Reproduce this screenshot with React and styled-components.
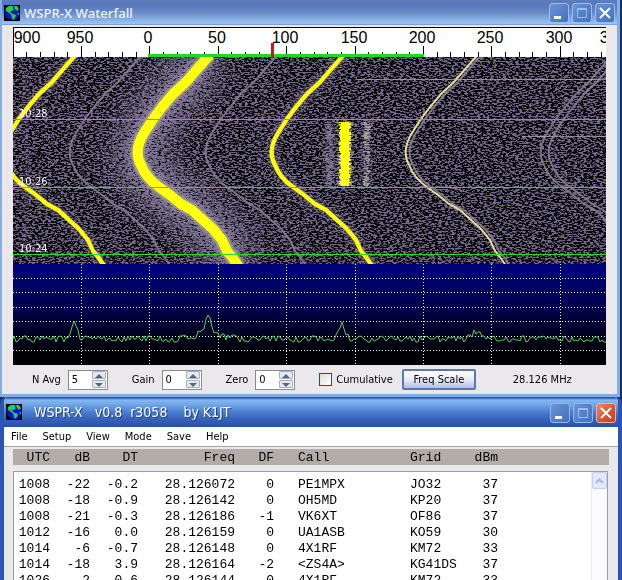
import React from 'react'
import styled, { createGlobalStyle } from 'styled-components'

const GlobalStyle = createGlobalStyle`
  * {
    box-sizing: border-box;
  }
  body {
    margin: 0;
    background: #16305f;
    font-family: "DejaVu Sans Condensed", "Open Sans", sans-serif;
    font-size: 11px;
    color: #000;
  }
`

const rows = [
  ['1008', '-22', '-0.2', '28.126072', '0', 'PE1MPX', 'JO32', '37'],
  ['1008', '-18', '-0.9', '28.126142', '0', 'OH5MD', 'KP20', '37'],
  ['1008', '-21', '-0.3', '28.126186', '-1', 'VK6XT', 'OF86', '37'],
  ['1012', '-16', '0.0', '28.126159', '0', 'UA1ASB', 'KO59', '30'],
  ['1014', '-6', '-0.7', '28.126148', '0', '4X1RF', 'KM72', '33'],
  ['1014', '-18', '3.9', '28.126164', '-2', '<ZS4A>', 'KG41DS', '37'],
  ['1026', '2', '0.6', '28.126144', '0', '4X1RF', 'KM72', '33'],
]
const headings = ['UTC', 'dB', 'DT', 'Freq', 'DF', 'Call', 'Grid', 'dBm']
const columns = [37, 40, 48, 97, 39, 136, 64, 24]
const menus = ['File', 'Setup', 'View', 'Mode', 'Save', 'Help']

// px per 50 Hz, and where 0 Hz sits in the plot
const STEP = 68.4
const ZERO = 136.4
const marks = [
  { label: '900', x: 14 },
  { label: '950', x: 67 },
  { label: '0', x: 135 },
  { label: '50', x: 204 },
  { label: '100', x: 272 },
  { label: '150', x: 341 },
  { label: '200', x: 409 },
  { label: '250', x: 477 },
  { label: '300', x: 546 },
  { label: '350', x: 600 },
]
const verticals = [-1, 0, 1, 2, 3, 4, 5, 6].map(i => Math.round(ZERO + i * STEP))

// drift of one carrier through the three time slots
const DRIFT =
  'M197 -2 L193 2 L179 18 L173 25 L160 37 L149 50 L140 62 L131 76 Q120 94 128 108 Q133 121 146 130 L157 138 L168 147 L179 153 L190 163 L200 172 L209 183 L214 194 L219 200 L226 210'

const noise = (seed, amount) => {
  let s = seed
  return () => {
    s = (s * 16807) % 2147483647
    return (s / 2147483647 - 0.5) * amount
  }
}

const tracePoints = () => {
  const rand = noise(4211, 7)
  const peaks = [[61, 17, 3], [195, 17, 2], [195, 8, 11], [329, 17, 3], [463, 8, 4]]
  const pts = []
  for (let x = 1; x < 2000; x += 2) {
    let y = 75 + rand()
    peaks.forEach(([px, h, w]) => {
      y -= h * Math.exp(-((x - px) ** 2) / (2 * w * w))
    })
    pts.push(`${x},${Math.round(y)}`)
  }
  return `0,75 ${pts.join(' ')}`
}
const trace = tracePoints()

const burst = (cx, half, wobble, seed) => {
  const rand = noise(seed, wobble)
  const bars = []
  for (let y = 65; y < 129; y += 1) {
    const l = Math.round(cx - half + rand())
    const r = Math.round(cx + half + rand())
    if (r > l) bars.push(`M${l} ${y}h${r - l}v1h${l - r}z`)
  }
  return bars.join('')
}

const Page = styled.div`
  display: flex;
  flex-direction: column;
  height: 100vh;
  overflow: hidden;
`

const Window = styled.section`
  display: flex;
  flex-direction: column;
  flex: ${p => (p.$active ? '1 0 auto' : 'none')};
  margin-right: ${p => (p.$active ? 0 : '2px')};
  border: solid ${p => (p.$active ? '#2a55b4' : '#82aee8')};
  border-width: ${p => (p.$active ? '0 4px' : '0 3px 3px 2px')};
  border-radius: ${p => (p.$active ? '7px 7px 0 0' : 0)};
  background: #ebe8ec;
  overflow: hidden;
`

const TitleBar = styled.header`
  display: flex;
  align-items: center;
  gap: ${p => (p.$active ? '12px' : '4px')};
  height: ${p => (p.$active ? '30px' : '25px')};
  margin: 0 ${p => (p.$active ? '-4px' : '-3px')} 0 ${p => (p.$active ? '-4px' : '-2px')};
  padding: 0 ${p => (p.$active ? '6px' : '5px')} 0 ${p => (p.$active ? '6px' : '4px')};
  background: ${p =>
    p.$active
      ? 'linear-gradient(#1d4c9c 0, #2c62b8 1px, #86b8f0 3px, #6ea4e6 8px, #4779cc 16px, #3560b8 23px, #2a4fa6 30px)'
      : 'linear-gradient(#5f7dbc 0, #5878b8 5px, #6488c8 12px, #8fb6e8 21px, #9cc4f0 24px, #5a80b8 25px)'};
`

const Title = styled.h1`
  flex: 1;
  margin: 0;
  white-space: pre;
  color: ${p => (p.$active ? '#fff' : '#e8f0fc')};
  font-family: ${p => (p.$active ? '"DejaVu Sans Condensed"' : '"Open Sans"')}, sans-serif;
  font-size: ${p => (p.$active ? '14px' : '13px')};
  font-weight: ${p => (p.$active ? 400 : 600)};
  text-shadow: ${p => (p.$active ? '1px 1px #1c3c84' : 'none')};
`

const Caption = styled.div`
  display: flex;
  gap: 3px;
  padding-top: ${p => (p.$active ? '2px' : 0)};
`

const CaptionButton = styled.button`
  width: 20px;
  height: 20px;
  padding: 0;
  border: 1px solid ${p => (p.$close ? '#e8b0a8' : p.$active ? '#90b8ee' : '#9cbcec')};
  border-radius: 3px;
  background: ${p =>
    p.$close
      ? 'linear-gradient(135deg, #e89070, #d8502c 60%, #c04428)'
      : 'linear-gradient(135deg, #6a94d8, #4470bc)'};

  svg {
    display: block;
  }
`

const Body = styled.div`
  display: flex;
  flex-direction: column;
  padding: 2px 11px 0;
`

const Ruler = styled.svg`
  display: block;
  width: 100%;
  height: 30px;
  border-top: 1px solid #000;
  border-left: 1px solid #000;
  background: #fff;
  font-family: "Liberation Sans", Arial, sans-serif;
  font-size: 16px;
`

const Waterfall = styled.svg`
  display: block;
  width: 100%;
  height: 207px;
  background: #050408;
  font-size: 11px;
`

const Spectrum = styled.svg`
  display: block;
  width: 100%;
  height: 101px;
  background: linear-gradient(#000080, #00004a 45%, #000008 85%, #000);
`

const Controls = styled.form`
  display: flex;
  align-items: center;
  height: 29px;
  padding-left: 19px;
`

const Field = styled.label`
  display: flex;
  align-items: center;
  gap: 7px;
  margin-right: 24px;
`

const Spin = styled.span`
  display: flex;
  align-items: center;
  width: 40px;
  height: 20px;
  border: 1px solid #8c8a90;
  background: #fff;
`

const SpinInput = styled.input`
  flex: 1;
  min-width: 0;
  padding: 0 0 0 3px;
  border: 0;
  outline: 0;
  background: transparent;
  font: inherit;
`

const SpinArrows = styled.span`
  display: flex;
  flex-direction: column;
  gap: 1px;
  padding-right: 1px;
`

const SpinButton = styled.button`
  width: 14px;
  height: 8px;
  padding: 0;
  border: 1px solid #a4b0c0;
  border-radius: 1px;
  background: #e4e8f0;

  svg {
    display: block;
    margin: 0 auto;
  }
`

const Check = styled.label`
  display: flex;
  align-items: center;
  gap: 4px;
  margin-right: 9px;

  input {
    appearance: none;
    width: 13px;
    height: 13px;
    margin: 0;
    border: 1px solid #1c5180;
    background: linear-gradient(135deg, #dcdcd7, #fff);
  }
`

const ScaleButton = styled.button`
  width: 74px;
  height: 21px;
  padding: 0;
  border: 2px solid #5878b4;
  border-radius: 2px;
  background: linear-gradient(#fff, #e8ecf8 50%, #b4c0dc);
  font: inherit;
`

const Frequency = styled.output`
  margin-left: 37px;
`

const MenuBar = styled.nav`
  display: flex;
  gap: 15px;
  height: 20px;
  padding-left: 7px;
  border-bottom: 1px solid #a8a4a4;
  background: #fff;
`

const MenuItem = styled.button`
  padding: 0;
  border: 0;
  background: none;
  font: inherit;
`

const Log = styled.div`
  display: flex;
  flex-direction: column;
  gap: 6px;
  padding: 2px 9px 0;
`

const LogTable = styled.table`
  table-layout: fixed;
  width: 485px;
  border-collapse: collapse;
  font-family: "Liberation Mono", "Courier New", monospace;
  font-size: 13px;
  line-height: 16px;
`

const Cell = styled.td`
  padding: 0 0 0 ${p => (p.$left ? '24px' : 0)};
  text-align: ${p => (p.$left ? 'left' : 'right')};
  font-weight: 400;
  white-space: nowrap;
`

const GridCell = styled(Cell)`
  padding: 0;
  text-align: left;
`

const HeadBar = styled.div`
  height: 16px;
  background: #b4aca6;

  table {
    line-height: 18px;
  }
`

const ListBox = styled.div`
  display: flex;
  justify-content: space-between;
  align-items: stretch;
  margin-right: 1px;
  border: 1px solid #a09c9c;
  border-bottom: 0;
  background: #fff;

  table {
    margin: 5px 0 0 -1px;
  }
`

const ScrollTrack = styled.div`
  width: 16px;
  border-left: 1px solid #e8e8f4;
  background: #fafaff;
`

const ScrollButton = styled.button`
  display: flex;
  align-items: center;
  justify-content: center;
  width: 15px;
  height: 17px;
  padding: 0;
  border: 1px solid #c4d0ec;
  border-radius: 2px;
  background: #e0e8fa;
`

const Globe = () => (
  <svg width="16" height="16" viewBox="0 0 16 16" aria-hidden="true">
    <rect width="16" height="16" fill="#000" />
    <path d="M4 1h8l3 4v6l-3 4H6l-4-3-1-3V4z" fill="#0814c8" />
    <path d="M2 3l3-2h4v2l1 1-2 2H6v1l2 1v1H6L4 7 2 6z" fill="#20d050" />
    <path d="M10 1h3l2 3-2 2-2-2z" fill="#20d050" />
    <path d="M7 9h3l2 1-1 3-2 2-1-2z" fill="#20d050" />
    <path d="M13 8h2v2h-1z" fill="#20b060" />
  </svg>
)

const WindowButtons = ({ active }) => (
  <Caption $active={active}>
    <CaptionButton $active={active} type="button" aria-label="Minimize">
      <svg width="18" height="18">
        <rect x="4" y="12" width="7" height="3" fill="#fff" />
      </svg>
    </CaptionButton>
    <CaptionButton $active={active} type="button" aria-label="Maximize">
      <svg width="18" height="18" fill="none" stroke="#9cc0f0">
        <path d="M4.5 4.5h9v9h-9zM4 5.5h10" />
      </svg>
    </CaptionButton>
    <CaptionButton $active={active} $close={active} type="button" aria-label="Close">
      <svg width="18" height="18" stroke="#fff" strokeWidth="2">
        <path d="M4 4l10 10M14 4L4 14" />
      </svg>
    </CaptionButton>
  </Caption>
)

const SpinField = ({ label, value }) => (
  <Field>
    {label}
    <Spin>
      <SpinInput type="text" defaultValue={value} />
      <SpinArrows>
        <SpinButton type="button" aria-label={`${label} up`}>
          <svg width="8" height="5"><path d="M0 5l4-4 4 4z" fill="#58687c" /></svg>
        </SpinButton>
        <SpinButton type="button" aria-label={`${label} down`}>
          <svg width="8" height="5"><path d="M0 1l4 4 4-4z" fill="#58687c" /></svg>
        </SpinButton>
      </SpinArrows>
    </Spin>
  </Field>
)

const FrequencyRuler = () => {
  const ticks = []
  for (let i = -9; i < 200; i += 1) {
    const x = Math.round(ZERO + (i * STEP) / 5) - 1
    ticks.push(`M${x}.5 ${i % 5 === 0 ? 18 : 24}V29`)
  }
  return (
    <Ruler>
      <path d={ticks.join('')} stroke="#000" />
      <rect x="134" y="26" width="276" height="3" fill="#20d828" />
      <rect x="257" y="15" width="3" height="14" fill="#c81820" />
      {marks.map(m => (
        <text key={m.label} x={m.x - 1} y="15" textAnchor="middle">{m.label}</text>
      ))}
    </Ruler>
  )
}

const WaterfallPlot = () => (
  <Waterfall>
    <defs>
      <path id="drift" d={DRIFT} fill="none" />
      <filter id="speckle" x="0" y="0" width="100%" height="100%" colorInterpolationFilters="sRGB">
        <feTurbulence type="fractalNoise" baseFrequency=".31 .71" numOctaves="3" seed="7" />
        <feColorMatrix values="0 0 0 0 .46  0 0 0 0 .41  0 0 0 0 .54  9 0 0 0 -4.2" />
      </filter>
      <filter id="dense" x="0" y="0" width="100%" height="100%" colorInterpolationFilters="sRGB">
        <feTurbulence type="fractalNoise" baseFrequency=".33 .73" numOctaves="3" seed="23" />
        <feColorMatrix values="0 0 0 0 .52  0 0 0 0 .48  0 0 0 0 .61  7 0 0 0 -2.6" />
      </filter>
      <filter id="soft" filterUnits="userSpaceOnUse" x="-200" y="-50" width="1000" height="300">
        <feGaussianBlur stdDeviation="14" />
      </filter>
      <filter id="edge" filterUnits="userSpaceOnUse" x="-200" y="-50" width="1000" height="300">
        <feGaussianBlur stdDeviation="2" />
      </filter>
      <mask id="near" maskUnits="userSpaceOnUse" x="0" y="0" width="2000" height="207">
        <use href="#drift" stroke="#fff" strokeWidth="50" filter="url(#soft)" />
        <use href="#drift" x="134" stroke="#777" strokeWidth="14" filter="url(#edge)" />
        <use href="#drift" x="-134" stroke="#777" strokeWidth="12" filter="url(#edge)" />
        <path d="M317 64V130M332 64V130M353 64V130" stroke="#bbb" strokeWidth="9" filter="url(#edge)" />
        <path d="M13 10V200M103 145V200M247 60V200M275 130V207M293 150V207M251 10V60" stroke="#666" strokeWidth="4" filter="url(#edge)" />
      </mask>
    </defs>
    <rect width="100%" height="207" filter="url(#speckle)" />
    <g mask="url(#near)">
      <rect width="100%" height="207" filter="url(#dense)" />
    </g>
    <use href="#drift" stroke="#9086ac" strokeWidth="20" opacity=".5" filter="url(#edge)" />
    <use href="#drift" stroke="#b0a884" strokeWidth="14" opacity=".6" />
    <g stroke="#8c8298" strokeWidth="2" opacity=".85">
      <use href="#drift" x="-68" />
      <use href="#drift" x="68" />
      <use href="#drift" x="272" />
      <use href="#drift" x="403" />
      <use href="#drift" x="411" />
    </g>
    <use href="#drift" x="268" stroke="#e4dc98" strokeWidth="2" />
    <g stroke="#b8b040" strokeWidth="5" opacity=".6">
      <use href="#drift" x="-134" />
      <use href="#drift" x="134" />
    </g>
    <g stroke="#ffff10">
      <use href="#drift" strokeWidth="10" />
      <use href="#drift" x="-134" strokeWidth="4" />
      <use href="#drift" x="134" strokeWidth="4" />
    </g>
    <path d={burst(332, 6, 7, 91)} fill="#8c8298" />
    <path d={burst(332, 5, 3, 17)} fill="#ffff10" />
    <path d={burst(316, 1, 7, 55)} fill="#8c84a0" opacity=".8" />
    <path d={burst(354, 1, 6, 77)} fill="#b4b09c" opacity=".8" />
    <g fill="#b8b4b0" opacity=".7">
      <rect x="345" y="22" width="100%" height="1" />
      <rect x="509" y="79" width="100%" height="1" />
    </g>
    <g fill="#20e020">
      <rect y="62" width="100%" height="1" />
      <rect y="130" width="100%" height="1" />
      <rect y="197" width="100%" height="1" />
    </g>
    <g fill="#f4f4f4">
      <text x="6" y="60">10:28</text>
      <text x="6" y="128">10:26</text>
      <text x="6" y="195">10:24</text>
    </g>
  </Waterfall>
)

const SpectrumPlot = () => (
  <Spectrum>
    <g stroke="#f4f4fa" strokeDasharray="1 2">
      {[14, 28, 43, 57, 72, 86].map(y => (
        <path key={y} d={`M0 ${y}.5H2000`} />
      ))}
      {verticals.map(x => (
        <path key={x} d={`M${x}.5 0V101`} />
      ))}
    </g>
    <polyline points={trace} fill="none" stroke="#48d848" />
  </Spectrum>
)

const Columns = () => (
  <colgroup>
    {columns.map((w, i) => (
      <col key={i} width={w} />
    ))}
  </colgroup>
)

const LogRow = ({ values, as }) => (
  <tr>
    {values.map((v, i) =>
      i === 6 ? (
        <GridCell key={i} as={as}>{v}</GridCell>
      ) : (
        <Cell key={i} as={as} $left={i === 5}>{v}</Cell>
      )
    )}
  </tr>
)

const App = () => (
  <Page>
    <GlobalStyle />
    <Window>
      <TitleBar>
        <Globe />
        <Title>WSPR-X Waterfall</Title>
        <WindowButtons />
      </TitleBar>
      <Body>
        <FrequencyRuler />
        <WaterfallPlot />
        <SpectrumPlot />
        <Controls>
          <SpinField label="N Avg" value="5" />
          <SpinField label="Gain" value="0" />
          <SpinField label="Zero" value="0" />
          <Check>
            <input type="checkbox" />
            Cumulative
          </Check>
          <ScaleButton type="button">Freq Scale</ScaleButton>
          <Frequency>28.126 MHz</Frequency>
        </Controls>
      </Body>
    </Window>
    <Window $active>
      <TitleBar $active>
        <Globe />
        <Title $active>{'WSPR-X   v0.8  r3058    by K1JT'}</Title>
        <WindowButtons active />
      </TitleBar>
      <MenuBar>
        {menus.map(m => (
          <MenuItem key={m} type="button">{m}</MenuItem>
        ))}
      </MenuBar>
      <Log>
        <HeadBar>
          <LogTable>
            <Columns />
            <thead>
              <LogRow values={headings} as="th" />
            </thead>
          </LogTable>
        </HeadBar>
        <ListBox>
          <LogTable>
            <Columns />
            <tbody>
              {rows.map((r, i) => (
                <LogRow key={i} values={r} />
              ))}
            </tbody>
          </LogTable>
          <ScrollTrack>
            <ScrollButton type="button" aria-label="Scroll up">
              <svg width="9" height="6" fill="none" stroke="#a8b8dc" strokeWidth="2">
                <path d="M1 5l3.500-3.500L8 5" />
              </svg>
            </ScrollButton>
          </ScrollTrack>
        </ListBox>
      </Log>
    </Window>
  </Page>
)

export default App
